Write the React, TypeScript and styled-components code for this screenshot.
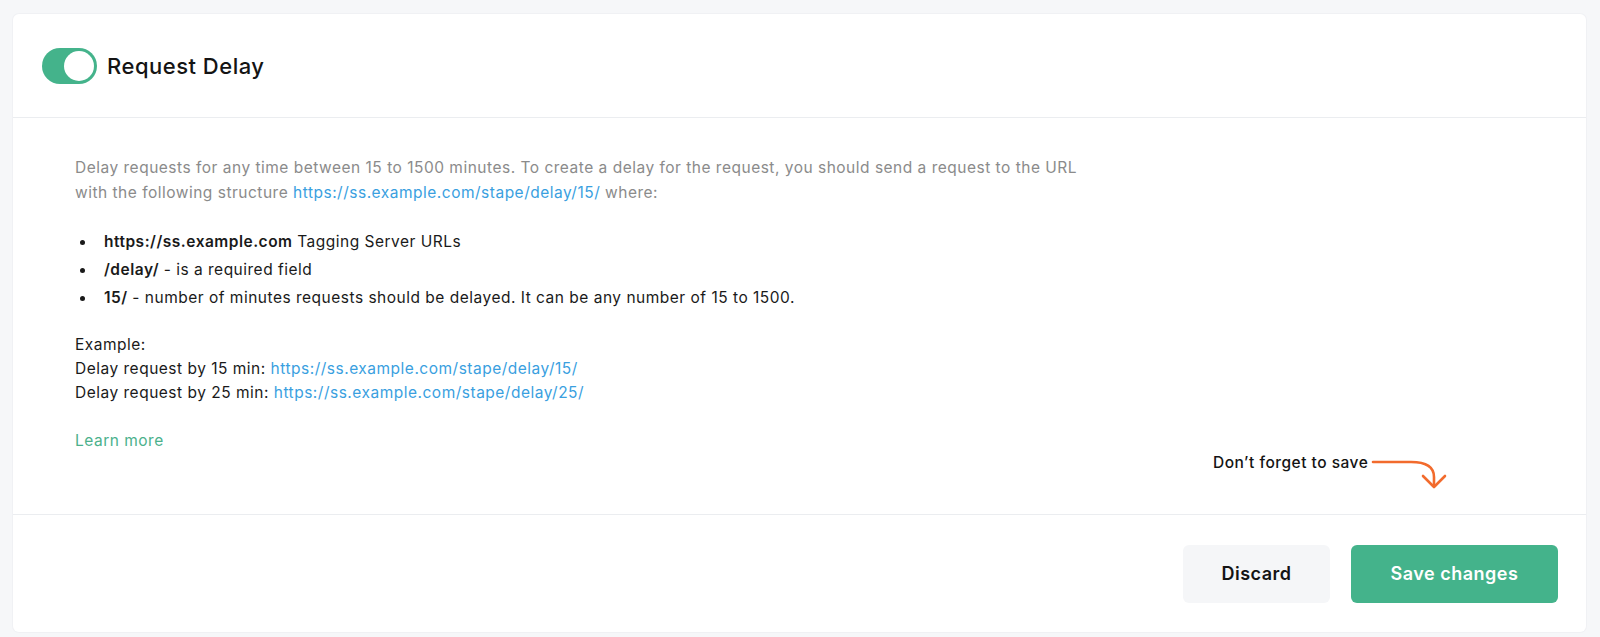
import React from "react";
import styled, { createGlobalStyle } from "styled-components";

const GlobalStyle = createGlobalStyle`
  html, body {
    margin: 0;
    padding: 0;
    background: #f6f7f9;
  }
  body {
    font-family: Inter, "Noto Sans", "Liberation Sans", sans-serif;
    color: #141414;
    -webkit-font-smoothing: antialiased;
  }
`;

const Page = styled.div`
  padding: 14px 14px 5px 13px;
  box-sizing: border-box;
  height: 637px;
`;

const Card = styled.section`
  background: #ffffff;
  border-radius: 6px;
  height: 100%;
  display: flex;
  flex-direction: column;
  box-shadow: 0 0 0 1px #f0f1f4;
`;

const Header = styled.header`
  height: 104px;
  box-sizing: border-box;
  display: flex;
  align-items: center;
  gap: 10px;
  padding: 0 0 0 29px;
  border-bottom: 1px solid #ebedf0;
`;

const Track = styled.span<{ $on: boolean }>`
  width: 55px;
  height: 36px;
  border-radius: 18px;
  background: ${(p) => (p.$on ? "#44b38b" : "#d5d8de")};
  display: flex;
  align-items: center;
  justify-content: ${(p) => (p.$on ? "flex-end" : "flex-start")};
  padding: 0 3px;
  box-sizing: border-box;
`;

const Knob = styled.span`
  width: 30px;
  height: 30px;
  border-radius: 50%;
  background: #ffffff;
`;

const Title = styled.h2`
  margin: 0;
  font-size: 22px;
  font-weight: 500;
  letter-spacing: 0.5px;
  color: #141414;
`;

const Body = styled.div`
  flex: 1;
  padding: 37px 0 0 62px;
  border-bottom: 1px solid #ebedf0;
  display: flex;
  flex-direction: column;
  position: relative;
  font-size: 15.5px;
  letter-spacing: 0.5px;
`;

const Intro = styled.p`
  margin: 0;
  max-width: 1030px;
  line-height: 25px;
  color: #8b8b8b;
`;

const Link = styled.a`
  color: #3a9fdf;
  text-decoration: none;
`;

const Points = styled.ul`
  margin: 23px 0 0 0;
  padding: 0;
  list-style: none;
  line-height: 28px;
  color: #1a1a1a;
`;

const Point = styled.li`
  display: flex;
  align-items: center;
  &::before {
    content: "";
    width: 5px;
    height: 5px;
    border-radius: 50%;
    background: #1a1a1a;
    margin: 0 19px 0 5px;
    flex: none;
  }
`;

const Strong = styled.b`
  font-weight: 600;
  margin-right: 0.3em;
`;

const Examples = styled.div`
  margin-top: 21px;
  line-height: 24px;
  color: #1a1a1a;
`;

const LearnMore = styled.a`
  margin-top: 24px;
  line-height: 24px;
  color: #4bb18c;
  text-decoration: none;
  align-self: flex-start;
`;

const Reminder = styled.div`
  position: absolute;
  left: 1200px;
  top: 335px;
  display: flex;
  align-items: flex-start;
  gap: 3px;
  font-size: 15.5px;
  font-weight: 500;
  letter-spacing: 0.5px;
  line-height: 20px;
  color: #141414;
`;

const Footer = styled.footer`
  height: 117px;
  box-sizing: border-box;
  display: flex;
  align-items: center;
  justify-content: flex-end;
  gap: 21px;
  padding: 0 28px 0 0;
`;

const Button = styled.button<{ $primary?: boolean }>`
  height: 58px;
  border: none;
  border-radius: 6px;
  font-family: Inter, "Noto Sans", "Liberation Sans", sans-serif;
  font-size: 18px;
  font-weight: 600;
  letter-spacing: 0.5px;
  cursor: pointer;
  width: ${(p) => (p.$primary ? "207px" : "147px")};
  background: ${(p) => (p.$primary ? "#44b38b" : "#f5f6f8")};
  color: ${(p) => (p.$primary ? "#ffffff" : "#141414")};
`;

const CurvedArrow = () => (
  <svg width="78" height="38" viewBox="0 0 78 38" fill="none">
    <path
      d="M2 9 H40 C55 9 63 14 63 24 V33"
      stroke="#f26b2d"
      strokeWidth="2.6"
      strokeLinecap="round"
      fill="none"
    />
    <path
      d="M52 23 L63 34 L74 23"
      stroke="#f26b2d"
      strokeWidth="2.6"
      strokeLinecap="round"
      strokeLinejoin="round"
      fill="none"
    />
  </svg>
);

export default function App() {
  return (
    <>
      <GlobalStyle />
      <Page>
        <Card>
          <Header>
            <Track $on>
              <Knob />
            </Track>
            <Title>Request Delay</Title>
          </Header>
          <Body>
            <Intro>
              Delay requests for any time between 15 to 1500 minutes. To create a delay for the
              request, you should send a request to the URL with the following structure{" "}
              <Link href="#">https://ss.example.com/stape/delay/15/</Link> where:
            </Intro>
            <Points>
              <Point>
                <span>
                  <Strong>https://ss.example.com</Strong>Tagging Server URLs
                </span>
              </Point>
              <Point>
                <span>
                  <Strong>/delay/</Strong>- is a required field
                </span>
              </Point>
              <Point>
                <span>
                  <Strong>15/</Strong>- number of minutes requests should be delayed. It can be any
                  number of 15 to 1500.
                </span>
              </Point>
            </Points>
            <Examples>
              Example:
              <br />
              Delay request by 15 min: <Link href="#">https://ss.example.com/stape/delay/15/</Link>
              <br />
              Delay request by 25 min: <Link href="#">https://ss.example.com/stape/delay/25/</Link>
            </Examples>
            <LearnMore href="#">Learn more</LearnMore>
            <Reminder>
              <span>Don’t forget to save</span>
              <CurvedArrow />
            </Reminder>
          </Body>
          <Footer>
            <Button>Discard</Button>
            <Button $primary>Save changes</Button>
          </Footer>
        </Card>
      </Page>
    </>
  );
}
